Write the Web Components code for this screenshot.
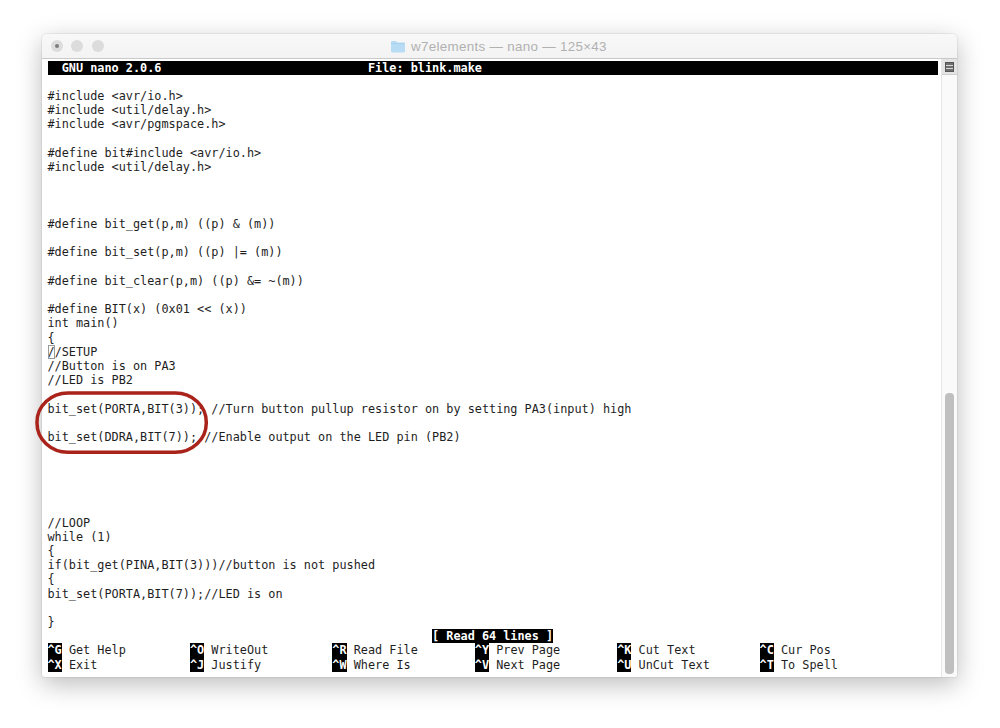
<!DOCTYPE html>
<html lang="en">
<head>
<meta charset="utf-8">
<title>nano</title>
<style>
html,body{margin:0;padding:0;background:#fff}
body{width:1000px;height:728px;overflow:hidden;font-family:"DejaVu Sans Mono",monospace}
</style>
</head>
<body>
<term-window caption="w7elements — nano — 125×43">
<nano-screen></nano-screen>
<term-scroll slot="side"></term-scroll>
</term-window>
<script>
class TermWindow extends HTMLElement{
  constructor(){super();
    const s=this.attachShadow({mode:'open'});
    s.innerHTML=`<style>
    :host{display:flex;flex-direction:column;width:915px;height:643px;margin:34px 0 0 42px;background:#fff;border-radius:5px 5px 3px 3px;
      box-shadow:0 0 0 1px rgba(0,0,0,.05),0 7px 26px rgba(0,0,0,.27);position:relative}
    .bar{flex:none;height:24px;display:flex;align-items:center;justify-content:center;background:linear-gradient(#f8f8f8,#f3f3f3);border-bottom:1px solid #c9c9c9;border-radius:5px 5px 0 0;position:relative;
      font:13.4px "Liberation Sans",Arial,sans-serif;color:#b1b1b1;letter-spacing:.3px}
    .lights{position:absolute;left:9px;top:6px;display:flex;gap:8.3px}
    .lights i{display:block;width:12px;height:12px;border-radius:50%;background:#dcdcdc;position:relative}
    .lights i:first-child::after{content:"";position:absolute;left:4px;top:4px;width:4px;height:4px;border-radius:50%;background:#7c7c7c}
    .cap{display:flex;align-items:center;gap:5px;padding-right:2px}
    svg{display:block}
    .main{flex:1;display:flex;min-height:0}
    .body{flex:1;min-width:0}
    </style>
    <div class="bar"><div class="lights"><i></i><i></i><i></i></div>
      <div class="cap"><svg width="16" height="13" viewBox="0 0 16 13"><path d="M1 2.2C1 1.5 1.5 1 2.2 1H6l1.4 1.6h6.4c.7 0 1.2.5 1.2 1.2v7.4c0 .7-.5 1.2-1.2 1.2H2.2C1.5 12.4 1 11.9 1 11.2z" fill="#b7dcf3"/><path d="M1 3.6h14" stroke="#a3d0ec" stroke-width=".8"/></svg><span>${this.getAttribute('caption')}</span></div></div>
    <div class="main"><div class="body"><slot></slot></div><slot name="side"></slot></div>`;
  }
}
customElements.define('term-window',TermWindow);

class TermScroll extends HTMLElement{
  constructor(){super();
    const s=this.attachShadow({mode:'open'});
    s.innerHTML=`<style>
    :host{display:flex;flex-direction:column;flex:none;width:15px;background:#fafafa;border-left:1px solid #e6e6e6;border-bottom-right-radius:3px;box-sizing:content-box}
    .head{flex:none;height:15px;background:#e4e4e4;border-bottom:1px solid #cfcfcf;display:flex;align-items:center;justify-content:center}
    .track{flex:1;display:flex;flex-direction:column;justify-content:flex-end;padding:0 3px 3px 3px}
    .thumb{height:281px;background:#bfbfbf;border-radius:4px}
    svg{display:block}
    </style>
    <div class="head"><svg width="9" height="10" viewBox="0 0 9 10"><rect x=".5" y=".5" width="8" height="9" fill="#6e6e6e" stroke="#555"/><path d="M1 3.5h7M1 6.5h7" stroke="#d8d8d8"/></svg></div>
    <div class="track"><div class="thumb"></div></div>`;
  }
}
customElements.define('term-scroll',TermScroll);

class NanoKey extends HTMLElement{
  constructor(){super();
    const s=this.attachShadow({mode:'open'});
    s.innerHTML=`<style>
    :host{display:block;width:20ch;height:14.23px;white-space:pre}
    b{background:#000;color:#fff;font-weight:700;display:inline-block;height:14.23px}
    </style><b>${this.getAttribute('k')}</b> <slot></slot>`;
  }
}
customElements.define('nano-key',NanoKey);

const LINES=[
"","#include &lt;avr/io.h&gt;","#include &lt;util/delay.h&gt;","#include &lt;avr/pgmspace.h&gt;","",
"#define bit#include &lt;avr/io.h&gt;","#include &lt;util/delay.h&gt;","","","",
"#define bit_get(p,m) ((p) &amp; (m))","","#define bit_set(p,m) ((p) |= (m))","",
"#define bit_clear(p,m) ((p) &amp;= ~(m))","","#define BIT(x) (0x01 &lt;&lt; (x))","int main()","{",
'<span class="cur">/</span>/SETUP',"//Button is on PA3","//LED is PB2","",
"bit_set(PORTA,BIT(3)); //Turn button pullup resistor on by setting PA3(input) high","",
"bit_set(DDRA,BIT(7)); //Enable output on the LED pin (PB2)","","","","","",
"//LOOP","while (1)","{","if(bit_get(PINA,BIT(3)))//button is not pushed","{","bit_set(PORTA,BIT(7));//LED is on","","}"
];
class NanoScreen extends HTMLElement{
  constructor(){super();
    const s=this.attachShadow({mode:'open'});
    const keys=[["^G","Get Help"],["^O","WriteOut"],["^R","Read File"],["^Y","Prev Page"],["^K","Cut Text"],["^C","Cur Pos"],
                ["^X","Exit"],["^J","Justify"],["^W","Where Is"],["^V","Next Page"],["^U","UnCut Text"],["^T","To Spell"]];
    s.innerHTML=`<style>
    :host{display:block;position:relative;padding:1.5px 0 0 5.5px;font:11.83px/14.23px "DejaVu Sans Mono","Liberation Mono",monospace;color:#1e1e1e}
    .head{background:#000;color:#fff;font-weight:700;width:125ch;height:14.23px;display:flex;white-space:pre}
    .head span:first-child{margin-left:2ch;width:43ch}
    .l{height:14.23px;white-space:pre}
    .cur{outline:1px solid #999;outline-offset:-1px}
    .status{display:flex;justify-content:center;width:125ch;height:14.23px}
    .status span{background:#000;color:#fff;font-weight:700;white-space:pre}
    .keys{display:grid;grid-template-columns:repeat(6,20ch)}
    svg{position:absolute;left:-8px;top:331px;pointer-events:none}
    </style>
    <div class="head"><span>GNU nano 2.0.6</span><span>File: blink.make</span></div>
    ${LINES.map(l=>`<div class="l">${l}</div>`).join('')}
    <div class="status"><span>[ Read 64 lines ]</span></div>
    <div class="keys">${keys.map(k=>`<nano-key k="${k[0]}">${k[1]}</nano-key>`).join('')}</div>
    <svg width="180" height="70" viewBox="0 0 180 70"><rect x="3" y="3" width="169.25" height="59.25" rx="31" ry="29" fill="none" stroke="#a9231a" stroke-width="3.5"/></svg>`;
  }
}
customElements.define('nano-screen',NanoScreen);
</script>
</body>
</html>
